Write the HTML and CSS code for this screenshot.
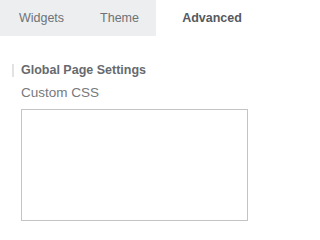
FILE: index.html
```html
<!DOCTYPE html>
<html>
<head>
<meta charset="utf-8">
<link rel="stylesheet" href="styles.css">
</head>
<body>
<div class="tabs">
  <div class="tab tab-widgets">Widgets</div>
  <div class="tab tab-theme">Theme</div>
  <div class="tab tab-advanced active">Advanced</div>
</div>
<div class="panel">
  <div class="section-title">Global Page Settings</div>
  <div class="field">
    <label class="field-label">Custom CSS</label>
    <textarea class="css-input"></textarea>
  </div>
</div>
</body>
</html>
```
FILE: styles.css
```css
html, body {
  margin: 0;
  padding: 0;
  background: #fff;
  font-family: "Liberation Sans", Arial, sans-serif;
}
.tabs {
  display: flex;
  height: 36px;
}
.tab {
  display: flex;
  align-items: center;
  justify-content: center;
  font-size: 12.5px;
  color: #6f7275;
  padding-bottom: 1px;
  box-sizing: border-box;
  background: #eceef0;
}
.tab-widgets { width: 83px; }
.tab-theme { width: 73px; }
.tab-advanced { width: 112px; }
.tab.active {
  background: #fff;
  color: #555a60;
  font-weight: bold;
}
.panel {
  padding: 28px 0 0 12px;
}
.section-title {
  border-left: 2px solid #e2e2e2;
  padding-left: 7px;
  font-size: 12.5px;
  font-weight: bold;
  color: #666a6e;
  line-height: 13px;
}
.field {
  padding-left: 9px;
  display: flex;
  flex-direction: column;
}
.field-label {
  font-size: 13.5px;
  color: #77797c;
  margin-top: 8px;
  line-height: 16px;
}
.css-input {
  margin: 8px 0 0 0;
  width: 227px;
  height: 112px;
  box-sizing: border-box;
  border: 1px solid #c4c4c4;
  padding: 4px;
  resize: none;
  outline: none;
  background: #fff;
}
```
